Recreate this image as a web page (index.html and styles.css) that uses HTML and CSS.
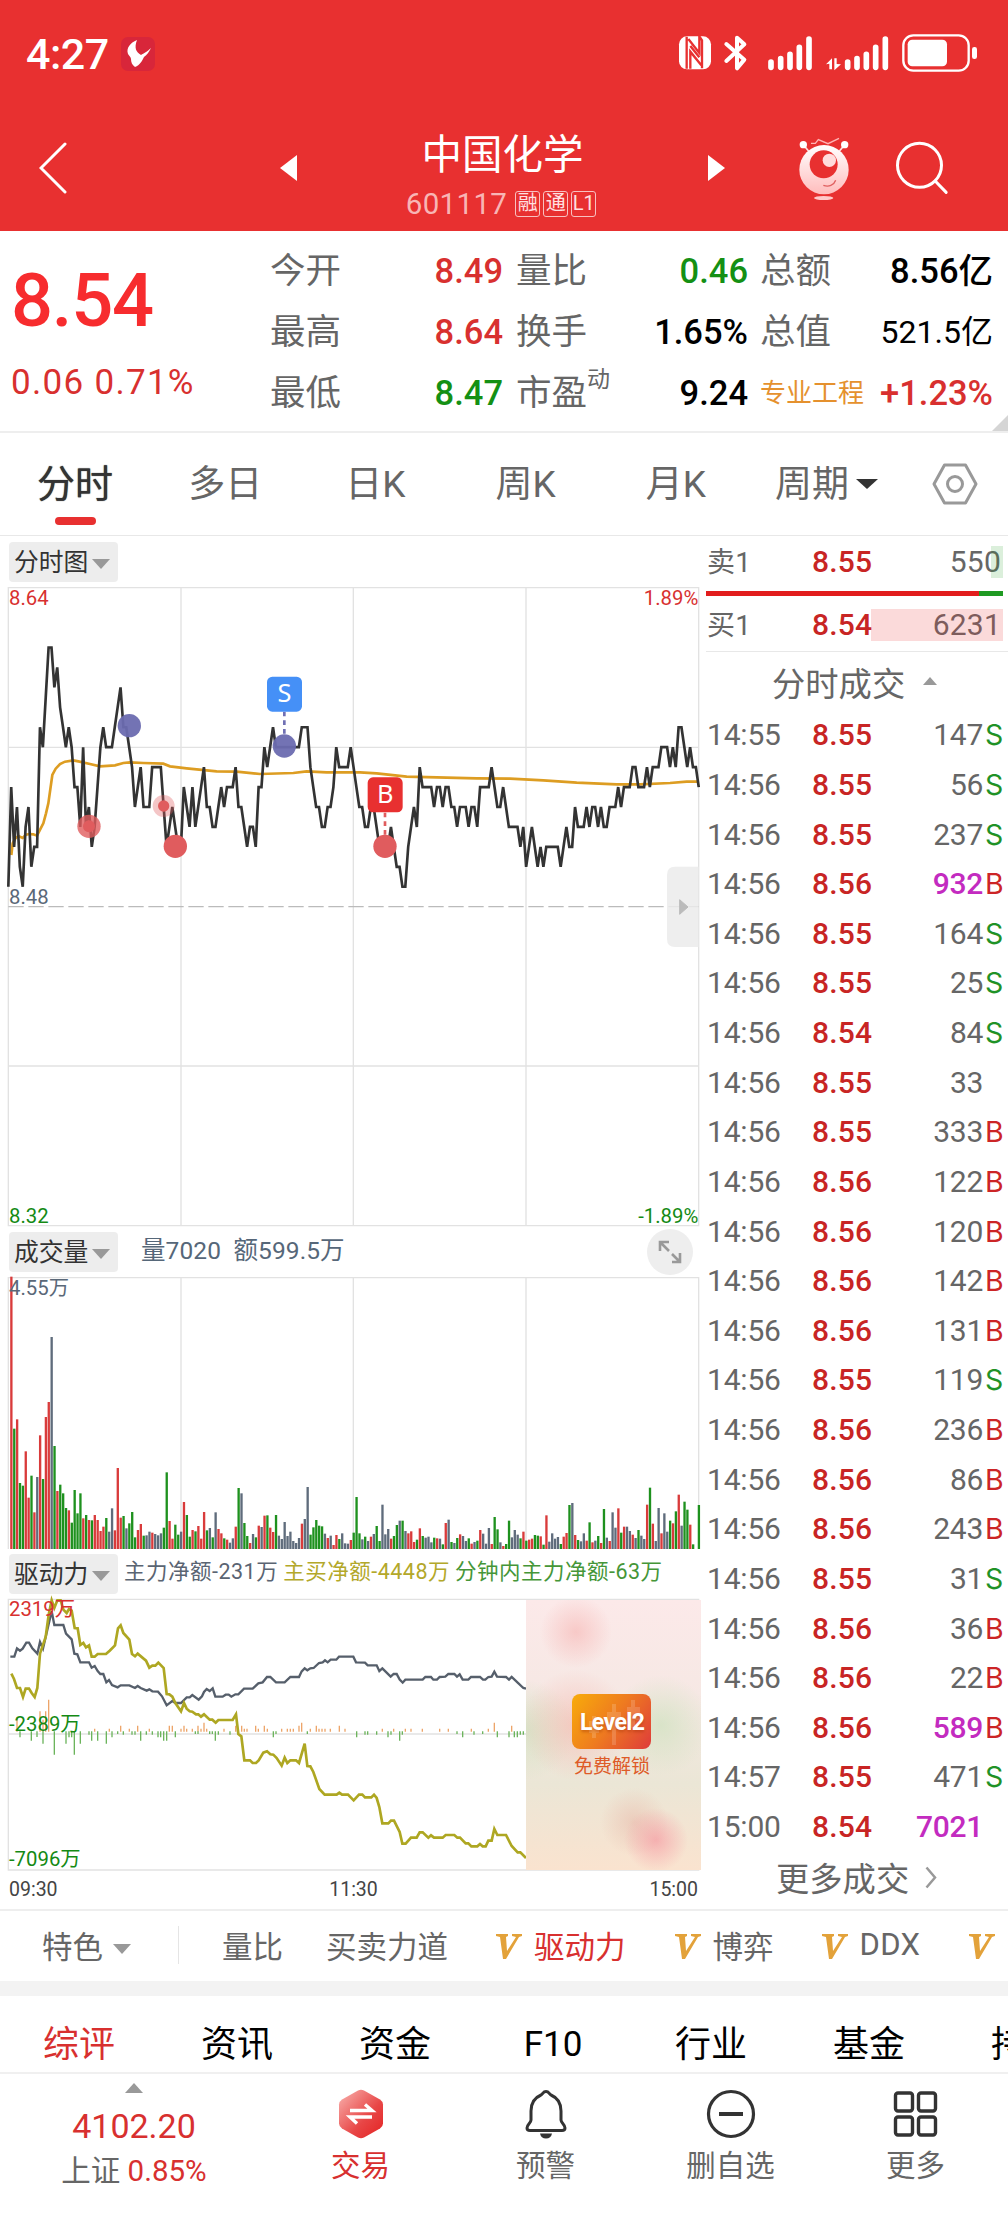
FILE: index.html
```html
<!DOCTYPE html>
<html lang="zh-CN">
<head>
    <meta charset="UTF-8">
    <meta name="viewport" content="width=device-width, initial-scale=1.0">
    <title>中国化学 601117</title>
    <link rel="stylesheet" href="styles.css">
</head>
<body>
    <div class="header">
        <div class="status">
            <span class="clock">4:27</span>
            <span class="app-badge">
                <svg width="26" height="28" viewBox="0 0 26 28"><path d="M12 0C5 3 1 8 3 14c1 2 3 3 3 5 0 3 1 6 4 8 5-2 7-6 9-10 3-2 5-5 7-9-4 4-7 5-10 7-5-3-7-7-4-15z" fill="#fff"/></svg>
            </span>
            <svg class="status-icons" width="340" height="50" viewBox="0 0 1020 150" fill="#fff">
                <rect x="57" y="34" width="96" height="99" rx="24"/>
                <path d="M80 35v96M91 131V80l33 41M85 42l33 42V34l8 12v84M91 63l27 34" fill="none" stroke="#e83030" stroke-width="7"/>
                <path d="M199 57l54 47-22 26V38l22 20-54 50" fill="none" stroke="#fff" stroke-width="12" stroke-linejoin="round" stroke-linecap="round"/>
                <g stroke="#fff" stroke-width="17" stroke-linecap="round">
                    <path d="M333 111v16M362 101v26M390 88v39M418 67v60M447 42v85"/>
                    <path d="M563 111v16M591 101v26M619 88v39M647 67v60M676 42v85"/>
                </g>
                <path d="M498 118l18-18v33h-8v-17zM523 100h7v17l13 1-20 18z"/>
                <rect x="730" y="31" width="196" height="106" rx="30" fill="none" stroke="#fff" stroke-width="7"/>
                <rect x="743" y="44" width="118" height="80" rx="14"/>
                <rect x="936" y="66" width="15" height="36" rx="7"/>
            </svg>
        </div>
        <div class="navbar">
            <svg class="back" width="28" height="52" viewBox="0 0 28 52"><path d="M26 2L2 26l24 24" fill="none" stroke="#fff" stroke-width="3" stroke-linecap="round"/></svg>
            <svg class="prev" width="17" height="26" viewBox="0 0 17 26"><path d="M17 0v26L0 13z" fill="#fff"/></svg>
            <div class="stock">
                <h1>中国化学</h1>
                <div class="code">601117<i>融</i><i>通</i><i>L1</i></div>
            </div>
            <svg class="next" width="17" height="26" viewBox="0 0 17 26"><path d="M0 0v26l17-13z" fill="#fff"/></svg>
            <svg class="robot" width="50" height="65" viewBox="417 330 150 195">
                <defs><linearGradient id="face" x1="0" y1="0" x2="0" y2="1"><stop offset="0" stop-color="#fff"/><stop offset="1" stop-color="#ffbcbc"/></linearGradient></defs>
                <path d="M430 356l18 22M554 356l-18 22" stroke="#ffe2e2" stroke-width="5"/>
                <circle cx="430" cy="356" r="11" fill="#fff"/><circle cx="554" cy="356" r="11" fill="#fff"/>
                <path d="M453 352h13l9-11 29 12 33-16" fill="none" stroke="#ffb4b4" stroke-width="4"/>
                <circle cx="492" cy="431" r="74" fill="url(#face)"/>
                <circle cx="491" cy="415" r="42" fill="#e83030"/>
                <circle cx="508" cy="403" r="20" fill="#ffdcdc"/>
                <path d="M490 478c16 6 32 0 37-15" fill="none" stroke="#e06060" stroke-width="4"/>
                <ellipse cx="491" cy="516" rx="29" ry="6" fill="#ffcaca"/>
            </svg>
            <svg class="search" width="53" height="54" viewBox="708 348 158 162" fill="none" stroke="#fff" stroke-width="9" stroke-linecap="round"><circle cx="778" cy="421" r="66"/><path d="M825 468l33 34"/></svg>
        </div>
    </div>

    <div class="quote">
        <div class="now">
            <div class="price">8.54</div>
            <div class="change">0.06 0.71%</div>
        </div>
        <dl class="col1">
            <dt>今开</dt><dd class="red">8.49</dd>
            <dt>最高</dt><dd class="red">8.64</dd>
            <dt>最低</dt><dd class="green">8.47</dd>
        </dl>
        <dl class="col2">
            <dt>量比</dt><dd class="green">0.46</dd>
            <dt>换手</dt><dd>1.65%</dd>
            <dt>市盈<sup>动</sup></dt><dd>9.24</dd>
        </dl>
        <dl class="col3">
            <dt>总额</dt><dd>8.56亿</dd>
            <dt>总值</dt><dd class="small">521.5亿</dd>
            <dt class="sector">专业工程</dt><dd class="red">+1.23%</dd>
        </dl>
        <span class="corner"></span>
    </div>

    <div class="periods">
        <span class="active">分时</span>
        <span>多日</span>
        <span>日K</span>
        <span>周K</span>
        <span>月K</span>
        <span>周期<b class="caret dark"></b></span>
        <span class="setting"><svg width="46" height="42" viewBox="0 0 46 42" fill="none" stroke="#999" stroke-width="3"><path d="M12.500 2h21L44 21 33.500 40h-21L2 21z" stroke-linejoin="round"/><circle cx="23" cy="21" r="7.500"/></svg></span>
    </div>

    <div class="main">
        <div class="charts">
            <div class="bar"><span class="chip">分时图<b class="caret"></b></span></div>
            <svg class="price-chart" width="704" height="639" viewBox="0 171 2112 1917">
                <g class="grid">
                    <path d="M25 173H2096V2087H25zM543 173V2087M1060 173V2087M1578 173V2087M25 652H2096M25 1608H2096"/>
                </g>
                <path d="M25 1130H2096" stroke="#bbb" stroke-width="4" stroke-dasharray="46 14"/>
                <polyline id="average" fill="none" stroke="#dd9d22" stroke-width="8"/>
                <polyline id="price" fill="none" stroke="#333" stroke-width="8"/>
                <text x="27" y="225" fill="#d8302f">8.64</text>
                <text x="27" y="1121" fill="#5a6878">8.48</text>
                <text x="27" y="2078" fill="#148a14">8.32</text>
                <text x="2095" y="225" fill="#d8302f" text-anchor="end">1.89%</text>
                <text x="2095" y="2078" fill="#148a14" text-anchor="end">-1.89%</text>
                <path d="M853 545v70" stroke="#7070b4" stroke-width="8" stroke-dasharray="14 12"/>
                <path d="M1155 848v70" stroke="#e05c5e" stroke-width="8" stroke-dasharray="14 12"/>
                <g fill="#6b6bb0" fill-opacity=".95"><circle cx="388" cy="587" r="35"/><circle cx="853" cy="648" r="35"/></g>
                <circle cx="267" cy="889" r="35" fill="#e05c5e" fill-opacity=".8"/><circle cx="267" cy="889" r="18" fill="#e05c5e"/>
                <circle cx="491" cy="828" r="33" fill="#e05c5e" fill-opacity=".35"/><circle cx="491" cy="828" r="17" fill="#e05c5e"/>
                <g fill="#e05c5e"><circle cx="526" cy="949" r="35"/><circle cx="1155" cy="949" r="35"/></g>
                <rect x="801" y="440" width="105" height="105" rx="16" fill="#4590f7"/>
                <rect x="1103" y="742" width="105" height="105" rx="16" fill="#e83030"/>
                <text class="mark" x="853" y="516">S</text>
                <text class="mark" x="1156" y="819">B</text>
                <path d="M2096 1010h-71q-24 0-24 24v193q0 24 24 24h71z" fill="#ebebeb" fill-opacity=".85"/>
                <path d="M2039 1109v44l25-22z" fill="#bbb" stroke="#bbb" stroke-width="3"/>
            </svg>

            <div class="bar volume-bar">
                <span class="chip">成交量<b class="caret"></b></span>
                <span class="volume-info">量7020&nbsp; 额599.5万</span>
                <span class="expand"><svg width="24" height="24" viewBox="0 0 24 24" fill="none" stroke="#999" stroke-width="2.600"><path d="M2 11V2h9M2 2l9 9M14 22h8v-9M14 14l8 8"/></svg></span>
            </div>
            <svg class="volume-chart" width="704" height="273" viewBox="0 231 2112 819">
                <path class="grid" d="M25 1047V233H2096V1047M543 233V1047M1060 233V1047M1578 233V1047"/>
                <g id="volume"></g>
                <text x="27" y="284" fill="#5a6878">4.55万</text>
            </svg>

            <div class="bar power-bar">
                <span class="chip">驱动力<b class="caret"></b></span>
                <span class="power-info"><i class="c1">主力净额-231万</i><i class="c2">主买净额-4448万</i><i class="c3">分钟内主力净额-63万</i></span>
            </div>
            <div class="power">
                <svg class="power-chart" width="704" height="272" viewBox="0 148 2112 816">
                    <path class="grid" d="M25 149H2096V961H25zM25 553H2096"/>
                    <g id="flow"></g>
                    <polyline fill="none" stroke="#565f6b" stroke-width="7" points="31,321 43,321 51,296 60,303 68,297 79,279 87,279 97,296 112,312 120,277 129,297 137,262 155,185 163,226 190,226 198,252 215,269 223,312 232,314 241,338 267,338 275,354 284,349 293,364 301,373 310,373 319,398 327,391 336,406 353,413 362,407 388,407 405,415 413,409 422,415 440,423 448,419 457,425 474,426 486,440 500,467 517,454 526,460 543,460 560,443 569,443 577,436 596,450 606,440 612,427 620,418 629,424 638,416 646,441 668,441 677,435 686,435 694,441 706,434 715,434 732,417 758,417 775,401 788,398 801,382 811,382 828,398 854,398 871,382 897,382 905,365 914,356 922,362 931,356 941,355 957,340 968,338 975,332 983,338 992,330 1009,330 1017,321 1060,321 1068,338 1095,339 1103,347 1130,347 1138,364 1147,356 1172,381 1181,373 1190,373 1199,390 1208,399 1216,390 1268,390 1276,382 1293,382 1300,390 1311,390 1319,382 1336,381 1345,373 1363,373 1371,381 1379,374 1388,390 1405,390 1413,382 1440,382 1449,390 1456,390 1465,382 1475,381 1483,366 1491,381 1518,382 1527,390 1535,382 1553,399 1570,415 1578,417"/>
                    <polyline fill="none" stroke="#aea722" stroke-width="8" points="34,372 42,388 51,415 60,415 69,442 77,417 87,417 95,430 104,442 112,415 120,312 137,262 146,195 155,152 163,175 172,152 182,152 190,180 200,190 207,178 215,183 224,235 233,236 241,286 250,280 258,293 267,287 275,321 284,321 293,313 318,313 329,303 345,287 354,236 362,227 370,250 388,270 396,313 405,320 413,312 438,333 448,354 457,348 466,348 475,339 491,355 500,433 508,434 517,441 526,460 543,485 552,460 560,477 569,485 577,486 588,494 595,494 603,501 612,494 629,510 637,510 647,519 655,511 698,511 708,494 715,553 724,560 733,632 750,632 758,640 768,640 776,632 790,609 801,605 811,614 820,615 830,625 845,648 854,624 862,640 871,632 888,632 897,640 914,582 922,649 931,650 940,667 958,718 974,735 1010,735 1018,729 1026,735 1044,735 1061,752 1077,735 1087,735 1095,743 1114,743 1122,735 1130,745 1138,772 1147,821 1165,821 1173,813 1182,813 1199,847 1207,882 1217,882 1233,864 1250,864 1259,848 1268,848 1285,864 1293,857 1302,864 1328,864 1337,856 1363,856 1372,864 1380,864 1397,881 1405,881 1414,890 1432,890 1440,883 1448,890 1457,890 1465,873 1475,873 1483,838 1492,856 1518,856 1535,889 1553,908 1561,908 1578,925"/>
                    <text x="27" y="199" fill="#d8302f">2319万</text>
                    <text x="27" y="545" fill="#148a14">-2389万</text>
                    <text x="27" y="950" fill="#148a14">-7096万</text>
                </svg>
                <div class="lock">
                    <div class="level2">
                        <svg width="79" height="55" viewBox="0 0 79 55" fill="#fff" fill-opacity=".16"><path d="M20 22h4v5h3v12h-3v5h-4v-5h-3V27h3zM40 10h4v8h5v17h-5v16h-4V35h-5V18h5zM59 6h4v7h5v13h-5v8h-4v-8h-4V13h4z"/></svg>
                        <span>Level2</span>
                    </div>
                    <p>免费解锁</p>
                </div>
            </div>
            <div class="times"><span>09:30</span><span>11:30</span><span>15:00</span></div>
        </div>

        <div class="side">
            <div class="order">
                <span class="label">卖1</span><span class="p">8.55</span><span class="q">550</span><b class="depth sell"></b>
            </div>
            <div class="ratio"><b></b></div>
            <div class="order buy">
                <span class="label">买1</span><span class="p">8.54</span><span class="q">6231</span><b class="depth"></b>
            </div>
            <div class="deal-title">分时成交<b class="caret up"></b></div>
            <div id="deals"></div>
            <div class="deal-more">更多成交<svg width="12" height="23" viewBox="0 0 12 23"><path d="M1.500 1.500l8.500 10-8.500 10" fill="none" stroke="#999" stroke-width="2.500"/></svg></div>
        </div>
    </div>

    <div class="features">
        <span class="special">特色<b class="caret"></b></span>
        <span class="f1">量比</span>
        <span class="f2">买卖力道</span>
        <svg class="v v1" width="26" height="25" viewBox="0 0 26 25"><path d="M0 0h12v2l-2 1 1 14L20 3l-4-1V0h10v2l-3 1L10 25H7L4 3 0 2z" fill="#e3a23a"/></svg>
        <span class="red">驱动力</span>
        <svg class="v v2" width="26" height="25" viewBox="0 0 26 25"><path d="M0 0h12v2l-2 1 1 14L20 3l-4-1V0h10v2l-3 1L10 25H7L4 3 0 2z" fill="#e3a23a"/></svg>
        <span>博弈</span>
        <svg class="v v3" width="26" height="25" viewBox="0 0 26 25"><path d="M0 0h12v2l-2 1 1 14L20 3l-4-1V0h10v2l-3 1L10 25H7L4 3 0 2z" fill="#e3a23a"/></svg>
        <span class="ddx">DDX</span>
        <svg class="v v4" width="26" height="25" viewBox="0 0 26 25"><path d="M0 0h12v2l-2 1 1 14L20 3l-4-1V0h10v2l-3 1L10 25H7L4 3 0 2z" fill="#e3a23a"/></svg>
    </div>

    <div class="pages">
        <span class="red">综评</span><span>资讯</span><span>资金</span><span class="f10">F10</span><span>行业</span><span>基金</span><span>持仓</span>
    </div>

    <div class="footer">
        <div class="index">
            <b class="caret up"></b>
            <p class="value">4102.20</p>
            <p>上证 <i class="red">0.85%</i></p>
        </div>
        <div class="item red">
            <svg width="46" height="50" viewBox="0 0 46 50">
                <defs><linearGradient id="hex" x1="0" y1="0" x2="1" y2="1"><stop offset="0" stop-color="#f9b4b0"/><stop offset=".6" stop-color="#e84646"/><stop offset="1" stop-color="#e42222"/></linearGradient></defs>
                <path d="M20 1.500q3-1.500 6 0l16 9q3 2 3 5v19q0 3-3 5l-16 9q-3 1.500-6 0l-16-9q-3-2-3-5v-19q0-3 3-5z" fill="url(#hex)"/>
                <path d="M12 21.500h22l-7-6M34 28H12l7 6.500" fill="none" stroke="#fff" stroke-width="3.400"/>
            </svg>
            <p>交易</p>
        </div>
        <div class="item">
            <svg width="46" height="50" viewBox="0 0 46 50" fill="none" stroke="#333" stroke-width="3"><path d="M23 2.500c-3 0-3 2.500-5 3.500-7 3-10 8-10 16v9c0 3-4 4-4 8 0 2 1 2.500 3 2.500h32c2 0 3-.5 3-2.500 0-4-4-5-4-8v-9c0-8-3-13-10-16-2-1-2-3.500-5-3.500z"/><path d="M17 44.500h12q-1 5-6 5t-6-5z" fill="#333" stroke="none"/></svg>
            <p>预警</p>
        </div>
        <div class="item">
            <svg width="50" height="50" viewBox="0 0 50 50" fill="none" stroke="#333" stroke-width="3.200"><circle cx="25" cy="25" r="22.500"/><path d="M13 25h24" stroke-width="4"/></svg>
            <p>删自选</p>
        </div>
        <div class="item">
            <svg width="46" height="50" viewBox="0 0 46 50" fill="none" stroke="#333" stroke-width="3.400"><rect x="2.500" y="4" width="17" height="18" rx="2.500"/><rect x="25.500" y="4" width="17" height="18" rx="2.500"/><rect x="2.500" y="28" width="17" height="18" rx="2.500"/><rect x="25.500" y="28" width="17" height="18" rx="2.500"/></svg>
            <p>更多</p>
        </div>
    </div>
    <script src="script.js"></script>
</body>
</html>
```

FILE: styles.css
```css
* {
    margin: 0;
    padding: 0;
    box-sizing: border-box;
}
body {
    width: 1008px;
    height: 2232px;
    overflow: hidden;
    background: #fff;
    color: #666;
    font-family: Roboto, "Noto Sans CJK SC", sans-serif;
}
svg { display: block; flex: none; }
i { font-style: normal; }
.red { color: #d8302f; }
.green { color: #149014; }

.caret {
    display: inline-block;
    width: 0;
    height: 0;
    border: 9px solid transparent;
    border-top: 10px solid #999;
    border-bottom: 0;
}
.caret.dark { border-width: 10px 11px 0; border-top-color: #333; }
.caret.up {
    border-top: 0;
    border-bottom: 9px solid #999;
}

/* header */
.header {
    height: 231px;
    background: #e83030;
    color: #fff;
}
.status {
    display: flex;
    align-items: center;
    height: 107px;
    padding: 0 8px 0 26px;
}
.clock {
    width: 82px;
    font-size: 43px;
    font-weight: 500;
    letter-spacing: -.5px;
}
.app-badge {
    display: flex;
    align-items: center;
    justify-content: center;
    width: 34px;
    height: 34px;
    margin-left: 13px;
    border-radius: 7px;
    background: #d8263a;
}
.status-icons { margin: -7px 0 0 auto; }
.navbar {
    display: flex;
    align-items: center;
    height: 122px;
}
.back { margin-left: 39px; }
.prev { margin-left: 213px; }
.stock {
    flex: 1;
    height: 122px;
    padding-top: 23px;
    text-align: center;
}
.stock h1 {
    font-size: 40.500px;
    font-weight: 400;
    line-height: 50px;
}
.code {
    display: flex;
    justify-content: center;
    align-items: center;
    gap: 3px;
    height: 36px;
    margin: 6px 3px 0 0;
    color: #f8b5b5;
    font-size: 29.500px;
    letter-spacing: .3px;
}
.code i {
    width: 25px;
    height: 26px;
    border: 1px solid #f8c0c0;
    border-radius: 3px;
    color: #ffe0e0;
    font-size: 20px;
    letter-spacing: 0;
    line-height: 23px;
    text-align: center;
}
.code i:first-child { margin-left: 5px; }
.robot { margin-left: 74px; }
.search { margin: 0 59px 0 47px; }

/* quote */
.quote {
    position: relative;
    display: flex;
    height: 202px;
    padding-top: 10px;
    border-bottom: 2px solid #eee;
}
.now {
    width: 270px;
    padding-left: 11px;
}
.price {
    height: 118px;
    color: #f72c2e;
    font-size: 74px;
    font-weight: 500;
    letter-spacing: -1.200px;
    line-height: 120px;
}
.change {
    color: #d8302f;
    font-size: 35px;
    letter-spacing: 1.300px;
    line-height: 48px;
}
.quote dl {
    display: grid;
    grid-template-columns: auto 1fr;
    grid-auto-rows: 61px;
    line-height: 61px;
}
.quote dt { font-size: 35.500px; white-space: nowrap; }
.quote dd {
    color: #000;
    font-size: 34.500px;
    font-weight: 500;
    text-align: right;
    white-space: nowrap;
}
.quote dd.red { color: #d8302f; }
.quote dd.green { color: #149014; }
.quote dd.small { font-size: 32px; font-weight: 400; }
.quote sup {
    position: relative;
    top: -18px;
    font-size: 23px;
    line-height: 0;
    vertical-align: baseline;
}
.col1 { width: 233px; }
.col2 { width: 232px; margin-left: 13px; }
.col3 { width: 233px; margin-left: 12px; }
.quote .sector { color: #e5912e; font-size: 26px; }
.corner {
    position: absolute;
    right: 0;
    bottom: 0;
    border-left: 16px solid transparent;
    border-bottom: 16px solid #d5d5d5;
}

/* period tabs */
.periods {
    display: grid;
    grid-template-columns: repeat(5, 150.200px) 151px 106px;
    height: 103px;
    border-bottom: 1px solid #e8e8e8;
    font-size: 37px;
}
.periods span {
    position: relative;
    display: flex;
    align-items: center;
    justify-content: center;
    padding-bottom: 7px;
}
.periods .setting { padding-bottom: 0; }
.periods .active { color: #333; font-size: 38px; text-shadow: 0 0 1px #333; }
.periods .active::after {
    content: "";
    position: absolute;
    left: 55px;
    bottom: 10px;
    width: 41px;
    height: 8px;
    border-radius: 4px;
    background: #e83030;
}
.periods .caret { margin: 6px 0 0 7px; }

.main {
    display: flex;
    height: 1375px;
    border-bottom: 2px solid #eee;
}
.charts { width: 704px; }
.charts svg { overflow: visible; }
.bar {
    display: flex;
    height: 51px;
    padding: 6px 0 0 9px;
}
.chip {
    display: flex;
    align-items: center;
    width: 109px;
    height: 40px;
    padding: 0 0 5px 5px;
    border-radius: 4px;
    background: #ededed;
    color: #333;
    font-size: 24.800px;
    white-space: nowrap;
}
.chip .caret { margin: 8px 0 0 4px; }
.grid {
    fill: none;
    stroke: #e2e2e2;
    stroke-width: 4;
}
.charts svg text { font-size: 61px; }
.charts svg .mark {
    fill: #fff;
    font-family: "Noto Sans", sans-serif;
    font-size: 76px;
    text-anchor: middle;
}
.volume-info {
    margin-left: 23px;
    color: #566779;
    font-size: 24.500px;
    line-height: 38px;
    letter-spacing: .1px;
}
.expand {
    display: flex;
    align-items: center;
    justify-content: center;
    width: 46px;
    height: 46px;
    margin: -3px 11px 0 auto;
    border-radius: 50%;
    background: #eee;
}
.power-bar { height: 49px; padding-top: 4px; }
.power-info {
    display: flex;
    gap: 5px;
    margin-left: 6px;
    font-size: 21.500px;
    letter-spacing: .5px;
    line-height: 36px;
    white-space: nowrap;
}
.c1 { color: #5a6472; }
.c2 { color: #b3a82a; }
.c3 { color: #459638; }
.power { position: relative; }
.lock {
    position: absolute;
    left: 526px;
    top: 1px;
    width: 175px;
    height: 270px;
    padding-top: 94px;
    background:
        radial-gradient(circle at 50px 32px, rgba(246, 180, 178, .6), transparent 36px),
        radial-gradient(circle at 130px 240px, rgba(246, 150, 160, .65), transparent 32px),
        radial-gradient(circle at 108px 222px, rgba(230, 180, 165, .5), transparent 34px),
        radial-gradient(circle at 50px 125px, rgba(246, 180, 170, .6), transparent 55px),
        radial-gradient(circle at 135px 125px, rgba(200, 225, 185, .6), transparent 50px),
        radial-gradient(circle at 0 130px, rgba(205, 225, 190, .7), transparent 50px),
        linear-gradient(#fce9e9, #f6e8e4 35%, #ebe6d6 68%, #fae3cf);
}
.level2 {
    position: relative;
    width: 79px;
    height: 55px;
    margin-left: 46px;
    border-radius: 8px;
    background: linear-gradient(125deg, #f8ac0a, #ee7a20 50%, #de3b3b);
}
.level2 span {
    position: absolute;
    left: 8px;
    top: 14px;
    color: #fff;
    font-size: 23px;
    font-weight: 700;
    line-height: 30px;
    letter-spacing: -.6px;
    text-shadow: 0 2px 3px rgba(150, 40, 0, .4);
}
.lock p {
    margin-left: 48px;
    color: #de5b28;
    font-size: 19px;
    line-height: 36px;
}
.times {
    display: flex;
    justify-content: space-between;
    padding: 0 6px 0 9px;
    color: #444;
    font-size: 19.500px;
    line-height: 37px;
}

/* order book and deals */
.side {
    width: 304px;
    padding-left: 2px;
}
.order {
    position: relative;
    display: flex;
    align-items: center;
    height: 51px;
    font-size: 30px;
    letter-spacing: .2px;
}
.order.buy {
    height: 61px;
    margin-top: -5px;
    padding-top: 7px;
    border-bottom: 1px solid #e8e8e8;
}
.label { width: 106px; padding: 0 0 3px 1px; font-size: 28px; }
.p { width: 62px; color: #c82524; font-weight: 500; }
.q { flex: 1; padding-right: 7px; text-align: right; }
.depth {
    position: absolute;
    right: 5px;
    top: 18px;
    width: 132px;
    height: 32px;
    background: rgba(232, 48, 48, .18);
}
.depth.sell {
    top: 10px;
    width: 12px;
    background: rgba(30, 155, 30, .16);
}
.ratio {
    width: 297px;
    height: 5px;
    margin-top: 4px;
    background: #1f9a22;
}
.ratio b {
    display: block;
    width: 273px;
    height: 5px;
    background: #e21d1d;
}
.deal-title {
    display: flex;
    align-items: center;
    height: 58px;
    padding-left: 66px;
    font-size: 33.300px;
}
.deal-title .caret {
    margin: -1px 0 0 18px;
    border-width: 0 7px 8px;
}
.deal {
    display: flex;
    align-items: center;
    height: 49.640px;
    font-size: 30px;
    white-space: nowrap;
}
.deal .t { width: 106px; padding-left: 1px; letter-spacing: -.2px; }
.deal .p { letter-spacing: .2px; }
.deal .q { padding-right: 1px; letter-spacing: -.3px; }
.deal .q.big { color: #c32bc0; font-weight: 500; }
.deal .s { width: 24px; padding-left: 1px; font-family: Inter, sans-serif; font-size: 28.500px; }
.deal .s.S { color: #1f9227; }
.deal .s.B { color: #cc2526; }
.deal-more {
    display: flex;
    align-items: center;
    height: 51px;
    padding-left: 70px;
    font-size: 33.300px;
}
.deal-more svg { margin: 2px 0 0 16px; }

/* indicator row */
.features {
    display: flex;
    align-items: center;
    height: 70px;
    padding: 0 0 3px 42px;
    overflow: hidden;
    font-size: 30.500px;
    white-space: nowrap;
}
.special {
    display: flex;
    align-items: center;
    width: 137px;
    height: 38px;
    border-right: 1px solid #e5e5e5;
}
.special .caret { margin: 9px 0 0 10px; }
.f1 { margin-left: 43px; }
.f2 { margin-left: 43px; }
.v1 { margin: 3px 12px 0 48px; }
.v2 { margin: 3px 12px 0 49px; }
.v3 { margin: 3px 12px 0 48px; }
.v4 { margin: 3px 0 0 49px; }
.ddx { font-size: 31px; letter-spacing: .3px; }

/* page tabs */
.pages {
    display: grid;
    grid-template-columns: repeat(7, 158px);
    height: 93px;
    padding-top: 16px;
    border-top: 15px solid #f3f3f3;
    border-bottom: 2px solid #f0f0f0;
    overflow: hidden;
    color: #000;
    font-size: 36px;
    text-align: center;
    line-height: 66px;
}
.f10 { font-size: 35px; }

/* footer */
.footer {
    display: flex;
    height: 158px;
    font-size: 29.500px;
    text-align: center;
}
.index { width: 268px; line-height: 44px; }
.index .caret {
    display: block;
    margin: 9px auto 9px;
    border-width: 0 9px 10px;
}
.index .value {
    color: #d8302f;
    font-size: 34px;
    line-height: 48px;
}
.index p { font-size: 29.500px; line-height: 42px; }
.item { width: 185px; padding-top: 15px; }
.item svg { margin: 0 auto; }
.item p { line-height: 54px; }
```

FILE: script.js
```js
// one price per minute, 09:30 - 15:00, in cents above 8.00
const prices = [
  49,54,51,53,50,49,52,53,50,51,51,57,56,58.5,61,61,59,60,58,57,56,57,56,54,54,52,56,52,53,51,
  52,54,56,57,56,56,56,57,58,59,57,57,56,55,53,54,55,53,53,53,55,55,55,55,53,51,52,53,52,51,
  51,54,53,52,54,52,53,54,55,53,53,52,52,53,54,53,54,54,54,55,53,53,52,51,52,52,51,54,54,56,
  55,56,57,56,56,56,56,56,56,56,56,56,57,57,57,55,54,53,53,52,52,53,53,54,56,55,55,55,55,56,
  55,54,53,53,52,52,53,53,52,51,51,51,51,52,51,50,50,49,49,51,52,53,52,55,54,54,54,54,53,54,
  54,53,54,54,53,53,52,53,53,53,52,53,53,52,54,54,54,54,55,54,53,53,54,53,52,52,52,52,51,52,
  50,51,52,51,50,51,50,51,51,51,51,51,50,51,52,51,51,53,52,52,52,53,52,53,53,52,53,52,52,53,
  53,53,54,53,54,54,54,55,55,54,54,54,55,54,55,55,55,56,56,56,55,56,55,57,57,56,55,56,55,55,54
];
const step = 8.63;
document.getElementById('price').setAttribute('points',
  prices.map((p, i) => (25 + i * step).toFixed(1) + ',' + (1130 - (p - 48) * 59.8).toFixed(1)).join(' '));

document.getElementById('average').setAttribute('points',
  '34,975 38,940 46,925 55,918 68,924 78,914 88,912 100,913 111,917 130,880 138,850 145,820 157,735 167,716 180,702 195,695 220,691 235,694 270,702 300,709 345,706 370,699 390,697 430,699 490,701 510,709 560,715 650,724 710,725 780,732 880,729 920,724 980,727 1080,727 1130,730 1220,740 1430,745 1530,746 1630,751 1730,758 1850,763 1920,763 2010,759 2060,755 2097,755');

// volume bars: r = up, g = down, b = flat
const volume = ('r817 g361 r389 g198 g190 r293 r154 g220 r110 b216 r341 g210 r396 r441 b636 g309 r174 g193 g167 g123 r116 g79 g177 g107 g167 r92 g102 r87 g86 r102 ' +
  'r87 r54 r67 g93 b52 b122 r56 r243 r94 g99 b62 g77 g111 g35 r57 r75 g40 b41 b52 r49 b45 b41 b47 g64 g230 r84 r31 g73 g43 b52 ' +
  'r141 g102 g37 r57 g53 r69 r31 r111 g56 b63 g35 b110 r60 r47 g32 r28 b19 b32 r67 g183 b167 g78 g39 r18 b45 g35 r70 b66 r100 g101 ' +
  'r64 r51 g102 b40 b30 b81 b39 b52 b24 b18 b33 r76 b90 b186 g43 g65 g87 g70 g68 b46 r33 b40 r12 r42 g30 b47 b17 b16 r27 g49 ' +
  'g156 g47 b29 g37 b24 r37 b45 g69 g24 b133 b44 b60 r31 g39 g72 b85 g85 b54 r47 r53 r21 g28 r62 g39 b34 b37 b20 g34 r32 b31 ' +
  'g14 r78 b88 g21 b18 g33 r44 b39 b24 g32 r16 b21 g25 r57 b46 b16 b63 r15 g96 g59 b20 r9 g15 g85 b35 b57 b43 g32 r52 g25 ' +
  'r28 r31 g42 g40 r38 g13 r101 b22 b47 b31 b36 g15 r37 r48 g132 b138 r42 g27 b23 b47 r25 g80 r20 b25 g39 r18 g120 b34 r24 b110 ' +
  'b64 r122 g49 r67 b67 b54 r43 b33 g57 b40 b30 r133 g184 r76 b24 b123 r47 b107 b52 g85 r77 g113 r163 b70 g142 g118 r73 g14 r0 g132').split(' ');
const barColor = { r: '#d93b3b', g: '#1e911e', b: '#5f6c7c' };
document.getElementById('volume').innerHTML = volume.map((v, i) => {
  const h = +v.slice(1);
  return `<rect x="${(22 + (i + 1) * step).toFixed(1)}" y="${1047 - h}" width="7" height="${h}" fill="${barColor[v[0]]}"/>`;
}).join('');

// net flow per minute
const inflow = [[51,502],[120,485],[129,510],[137,485],[146,450],[284,537],[328,537],[362,528],[388,537],[413,528],[448,537],[508,528],[517,528],[543,537],[552,528],[560,537],[577,537],[594,528],[603,537],[612,519],[620,537],[672,537],[707,528],[725,528],[733,537],[741,537],[767,528],[775,537],[793,528],[802,537],[845,537],[862,537],[871,537],[880,537],[897,528],[905,519],[931,537],[949,528],[957,537],[966,537],[975,537],[991,537],[1018,528],[1035,537],[1147,537],[1181,537],[1216,537],[1233,537],[1267,537],[1319,537],[1345,537],[1414,537],[1465,537],[1483,519],[1535,528]];
const outflow = [[60,563],[94,573],[111,562],[129,582],[163,615],[198,582],[207,563],[215,563],[223,615],[241,582],[267,555],[275,573],[293,573],[319,582],[336,563],[353,553],[370,555],[396,555],[405,555],[422,573],[439,555],[457,555],[474,563],[482,563],[491,573],[500,573],[526,563],[586,553],[594,553],[629,553],[637,553],[646,573],[655,555],[690,555],[820,563],[828,553],[922,553],[1070,563],[1095,555],[1103,555],[1130,555],[1164,563],[1173,555],[1199,573],[1207,555],[1371,553],[1388,563],[1422,555],[1448,553],[1492,563],[1527,563],[1543,563],[1552,563],[1561,555],[1570,555]];
document.getElementById('flow').innerHTML =
  inflow.map(([x, y]) => `<path d="M${x} 546V${y}" stroke="#eda56a" stroke-width="4"/>`).join('') +
  outflow.map(([x, y]) => `<path d="M${x} 545V${y}" stroke="#6cb45c" stroke-width="4"/>`).join('');

// deals
const deals = [
  ['14:55', '8.55', 147, 'S'], ['14:56', '8.55', 56, 'S'], ['14:56', '8.55', 237, 'S'], ['14:56', '8.56', 932, 'B'],
  ['14:56', '8.55', 164, 'S'], ['14:56', '8.55', 25, 'S'], ['14:56', '8.54', 84, 'S'], ['14:56', '8.55', 33, ''],
  ['14:56', '8.55', 333, 'B'], ['14:56', '8.56', 122, 'B'], ['14:56', '8.56', 120, 'B'], ['14:56', '8.56', 142, 'B'],
  ['14:56', '8.56', 131, 'B'], ['14:56', '8.55', 119, 'S'], ['14:56', '8.56', 236, 'B'], ['14:56', '8.56', 86, 'B'],
  ['14:56', '8.56', 243, 'B'], ['14:56', '8.55', 31, 'S'], ['14:56', '8.56', 36, 'B'], ['14:56', '8.56', 22, 'B'],
  ['14:56', '8.56', 589, 'B'], ['14:57', '8.55', 471, 'S'], ['15:00', '8.54', 7021, '']
];
document.getElementById('deals').innerHTML = deals.map(([t, p, q, s]) =>
  `<div class="deal"><span class="t">${t}</span><span class="p">${p}</span><span class="q${q > 500 ? ' big' : ''}">${q}</span><span class="s ${s}">${s}</span></div>`
).join('');
```
